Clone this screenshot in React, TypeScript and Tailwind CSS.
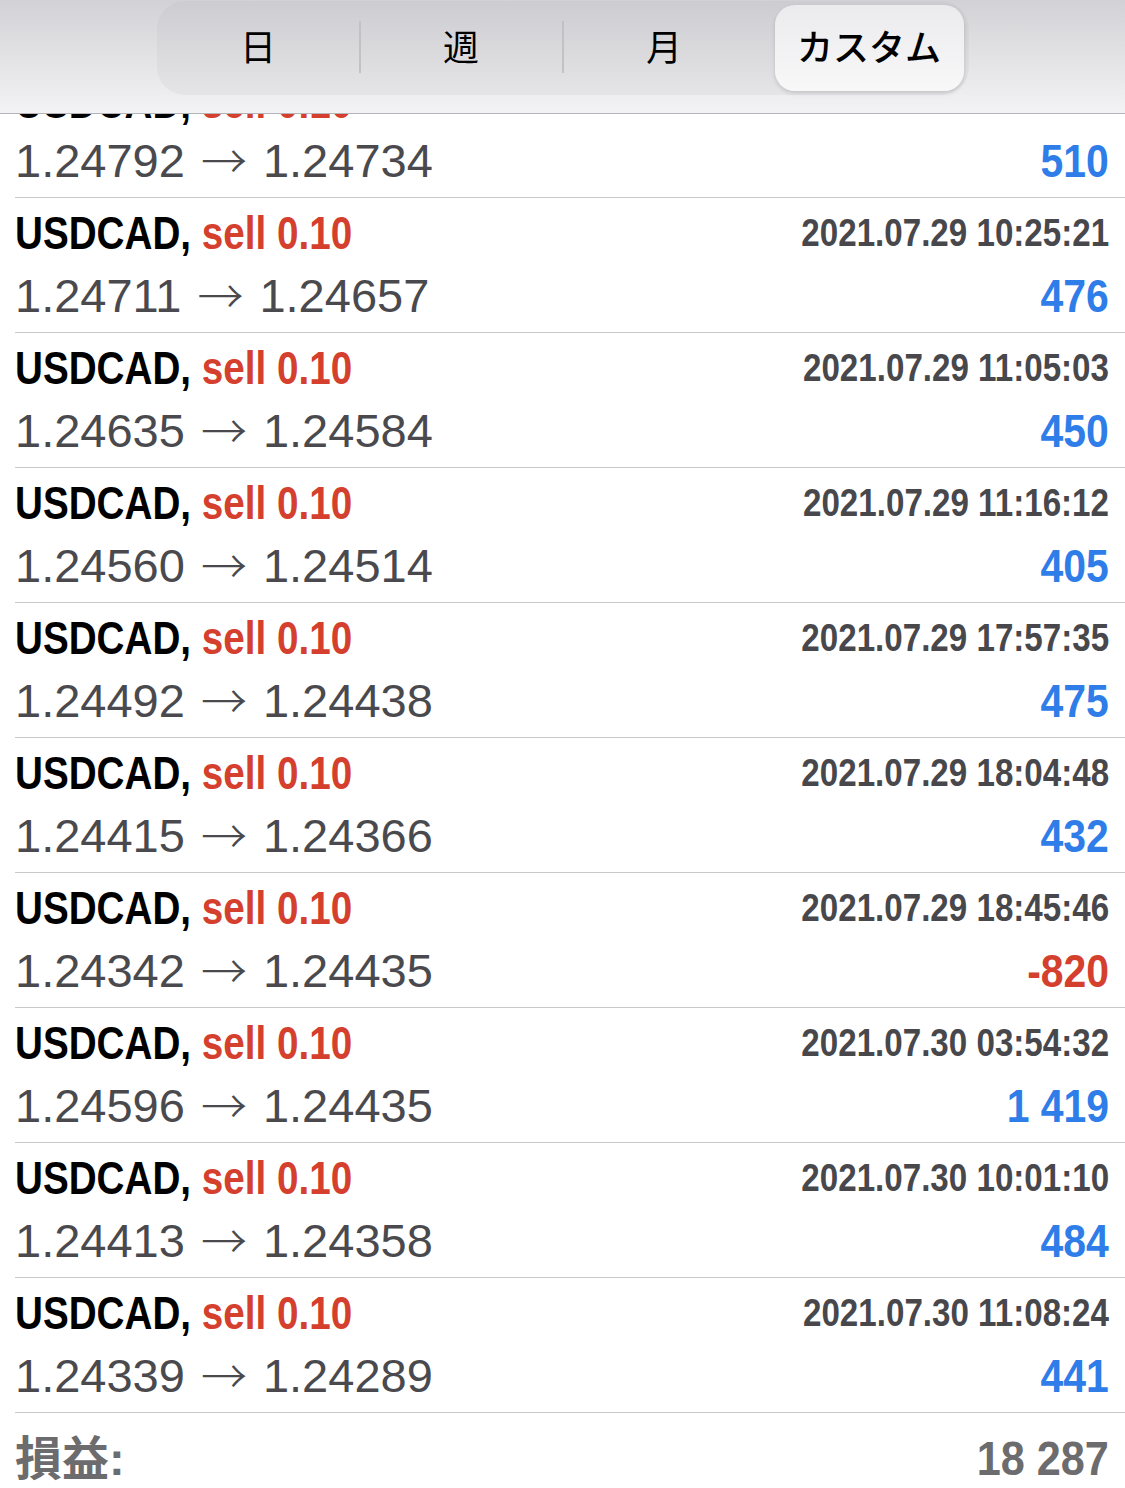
import React from "react";

type Trade = {
  date: string;
  open: string;
  close: string;
  profit: string;
};

const trades: Trade[] = [
  { date: "", open: "1.24792", close: "1.24734", profit: "510" },
  { date: "2021.07.29 10:25:21", open: "1.24711", close: "1.24657", profit: "476" },
  { date: "2021.07.29 11:05:03", open: "1.24635", close: "1.24584", profit: "450" },
  { date: "2021.07.29 11:16:12", open: "1.24560", close: "1.24514", profit: "405" },
  { date: "2021.07.29 17:57:35", open: "1.24492", close: "1.24438", profit: "475" },
  { date: "2021.07.29 18:04:48", open: "1.24415", close: "1.24366", profit: "432" },
  { date: "2021.07.29 18:45:46", open: "1.24342", close: "1.24435", profit: "-820" },
  { date: "2021.07.30 03:54:32", open: "1.24596", close: "1.24435", profit: "1 419" },
  { date: "2021.07.30 10:01:10", open: "1.24413", close: "1.24358", profit: "484" },
  { date: "2021.07.30 11:08:24", open: "1.24339", close: "1.24289", profit: "441" },
];

// Helvetica-like bold, squeezed to look condensed
const bold = "font-['Liberation_Sans',sans-serif] font-bold inline-block whitespace-nowrap";

const TradeRow = ({ trade, first }: { trade: Trade; first?: boolean }) => {
  const loss = trade.profit.startsWith("-");
  return (
    <div
      className={`ml-[15px] border-b border-[#c8c8cc] pr-[16px] ${
        first ? "-mt-[51px]" : ""
      }`}
    >
      {/* symbol / date */}
      <div
        className={`h-[70px] flex items-center justify-between ${
          first ? "pt-[8px]" : ""
        }`}
      >
        <span className={`${bold} text-[46px] scale-x-[0.84] origin-left`}>
          <span className="text-black">USDCAD, </span>
          <span className="text-[#d4402d]">sell 0.10</span>
        </span>
        <span className={`${bold} text-[39px] text-[#48484c] scale-x-[0.85] origin-right`}>
          {trade.date}
        </span>
      </div>
      {/* prices / profit */}
      <div className="h-[56px] mb-[8px] flex items-center justify-between">
        <span className="font-['Liberation_Sans',sans-serif] text-[47px] text-[#4a4a4e] whitespace-nowrap flex items-center">
          <span>{trade.open}</span>
          <span className="font-['Noto_Sans_CJK_JP',sans-serif] text-[46px] font-light mx-[16px] leading-none -mt-[6px]">
            →
          </span>
          <span>{trade.close}</span>
        </span>
        <span
          className={`${bold} text-[46px] scale-x-[0.89] origin-right ${
            loss ? "text-[#d4402d]" : "text-[#2e7de8]"
          }`}
        >
          {trade.profit}
        </span>
      </div>
    </div>
  );
};

const tabs = ["日", "週", "月", "カスタム"];

export default function App() {
  return (
    <div className="w-[1125px] h-[1488px] bg-white overflow-hidden flex flex-col">
      {/* Period tabs */}
      <header className="relative z-10 h-[114px] shrink-0 bg-gradient-to-b from-[#d2d2d6] to-[#f3f3f5] border-b border-[#b4b4b8] flex justify-center">
        <div className="w-[812px] h-[94px] mt-[1px] rounded-[28px] bg-gradient-to-b from-[#cdcdd1] to-[#e5e5e8] flex font-['Noto_Sans_CJK_JP',sans-serif]">
          {tabs.map((t, i) => {
            const active = i === tabs.length - 1;
            return (
              <React.Fragment key={t}>
                {i > 0 && i < tabs.length - 1 && (
                  <div className="w-[2px] -mx-[1px] h-[52px] mt-[20px] bg-[#c2c2c6]" />
                )}
                <div className="w-[203px] flex">
                  <div
                    className={`flex-1 flex items-center justify-center pb-[6px] text-[36px] text-black ${
                      active
                        ? "my-[4px] ml-[9px] mr-[5px] bg-gradient-to-b from-[#ebebed] to-[#f8f8f9] rounded-[20px] shadow-[0_2px_4px_rgba(0,0,0,0.15)] font-medium"
                        : ""
                    }`}
                  >
                    {t}
                  </div>
                </div>
              </React.Fragment>
            );
          })}
        </div>
      </header>

      {/* Trades */}
      <div className="overflow-hidden">
        {trades.map((t, i) => (
          <TradeRow key={t.open + t.close} trade={t} first={i === 0} />
        ))}
      </div>

      {/* Total */}
      <div className="flex-1 flex items-center justify-between pl-[15px] pr-[16px] pt-[16px]">
        <span className="font-['Liberation_Sans','Noto_Sans_CJK_JP',sans-serif] font-bold text-[47px] text-[#6c6c6e] leading-none">
          損益:
        </span>
        <span className={`${bold} text-[48px] text-[#6c6c6e] scale-x-[0.9] origin-right leading-none`}>
          18 287
        </span>
      </div>
    </div>
  );
}
